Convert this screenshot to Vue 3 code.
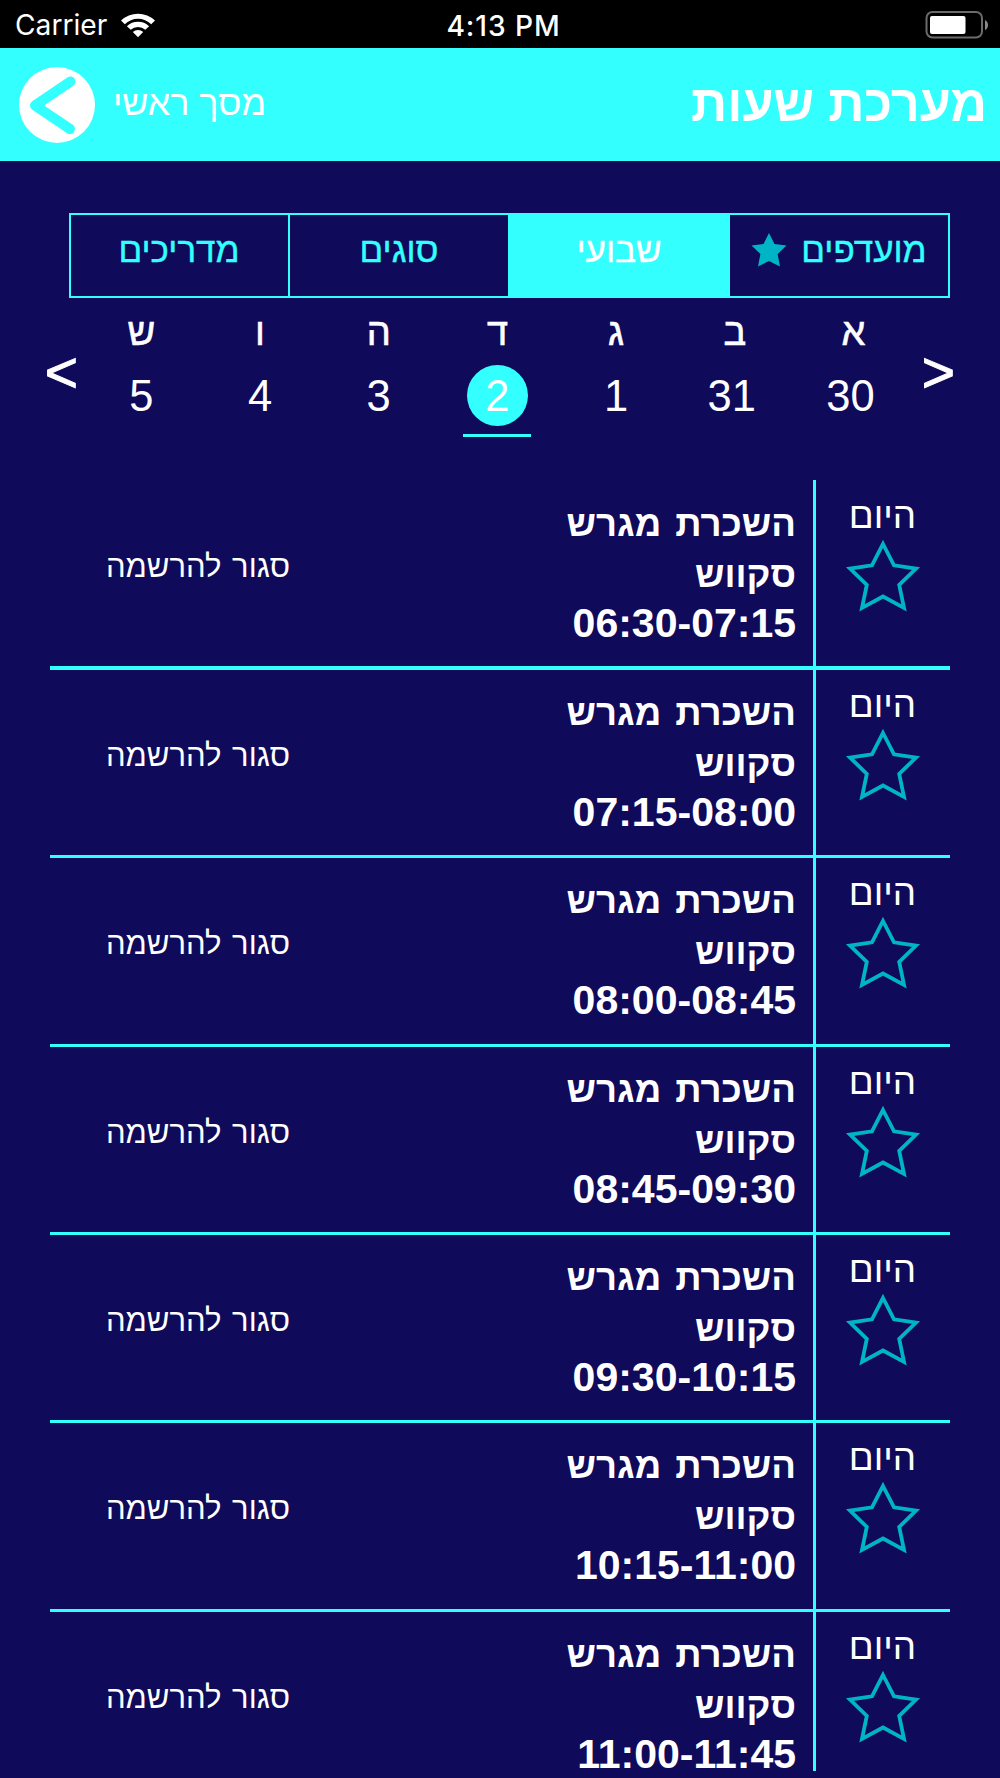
<script setup>
import { ref } from 'vue';

const tabs = ref([
    { id: 1, label: 'מדריכים' },
    { id: 2, label: 'סוגים' },
    { id: 3, label: 'שבועי', active: true },
    { id: 4, label: 'מועדפים', star: true },
]);

const days = ref([
    { letter: 'ש', date: 5 },
    { letter: 'ו', date: 4 },
    { letter: 'ה', date: 3 },
    { letter: 'ד', date: 2, active: true },
    { letter: 'ג', date: 1 },
    { letter: 'ב', date: 31 },
    { letter: 'א', date: 30 },
]);

const hours = ref([
    '06:30-07:15',
    '07:15-08:00',
    '08:00-08:45',
    '08:45-09:30',
    '09:30-10:15',
    '10:15-11:00',
    '11:00-11:45',
]);
</script>

<template>
    <div class="screen">
        <div class="status-bar">
            <div class="carrier">
                <span>Carrier</span>
                <svg class="wifi" viewBox="0 0 34 25" width="34" height="25">
                    <path d="M0 7.5 A24.5 24.5 0 0 1 34 7.5 L30.2 11.2 A19 19 0 0 0 3.8 11.2 Z" />
                    <path d="M5.9 13.2 A16 16 0 0 1 28.1 13.2 L24.3 16.8 A10.6 10.6 0 0 0 9.7 16.8 Z" />
                    <path d="M11.8 19 A7.6 7.6 0 0 1 22.2 19 L17 24.3 Z" />
                </svg>
            </div>
            <div class="clock">4:13 PM</div>
            <svg class="battery" viewBox="0 0 64 28" width="64" height="28">
                <rect x="1.5" y="1" width="55.5" height="25.5" rx="6" fill="none" stroke="#6b6b6b" stroke-width="2" />
                <rect x="5" y="5" width="35.5" height="18" rx="2" fill="#fff" />
                <path d="M60 9 Q63 10.5 63 14 Q63 17.5 60 19 Z" fill="#8a8a8a" />
            </svg>
        </div>

        <header class="header">
            <svg class="back" viewBox="0 0 76 76" width="76" height="76">
                <circle cx="38" cy="38" r="38" fill="#fff" />
                <path d="M51.5 14.5 L16 38.5 L51 62" fill="none" stroke="#33ffff" stroke-width="10" stroke-linecap="round" stroke-linejoin="round" />
            </svg>
            <span class="back-label">מסך ראשי</span>
            <h1 class="title">מערכת שעות</h1>
        </header>

        <nav class="tabs">
            <div v-for="tab in tabs" :key="tab.id" class="tab" :class="{ active: tab.active }">
                <svg v-if="tab.star" class="tab-star" viewBox="0 0 36 34" width="36" height="34">
                    <path d="M18 0 L23.5 11 L35.5 12.6 L26.6 21 L29 33.5 L18 28 L7 33.5 L9.4 21 L0.5 12.6 L12.5 11 Z" />
                </svg>
                <span>{{ tab.label }}</span>
            </div>
        </nav>

        <div class="week">
            <div class="arrow prev">&lt;</div>
            <div v-for="day in days" :key="day.date" class="day" :class="{ active: day.active, wide: day.date > 9 }">
                <div class="letter">{{ day.letter }}</div>
                <div class="date">{{ day.date }}</div>
            </div>
            <div class="arrow next">&gt;</div>
        </div>

        <div class="lessons">
            <div v-for="hour in hours" :key="hour" class="lesson">
                <div class="state">סגור להרשמה</div>
                <div class="details">
                    <p>השכרת מגרש</p>
                    <p>סקווש</p>
                    <p class="hour">{{ hour }}</p>
                </div>
                <div class="favorite">
                    <span>היום</span>
                    <svg viewBox="0 0 76 74" width="76" height="74">
                        <path d="M38 5 L49 26.3 L71 29.5 L54.2 46 L59 68.8 L38 57.5 L17 68.8 L21.8 46 L5 29.5 L27 26.3 Z" />
                    </svg>
                </div>
            </div>
        </div>
    </div>
</template>

<style>
body {
    margin: 0;
    background: #100a5a;
}
</style>

<style scoped>
.screen {
    width: 1000px;
    height: 1778px;
    overflow: hidden;
    background: #100a5a;
    color: #ffffff;
    font-family: "Liberation Sans", Arial, sans-serif;
}

.status-bar {
    display: grid;
    grid-template-columns: 1fr auto 1fr;
    align-items: center;
    box-sizing: border-box;
    height: 48px;
    padding: 2px 11px 0 15px;
    background: #000000;
    font-family: Inter, sans-serif;
    font-size: 28.2px;
}

.carrier {
    display: flex;
    align-items: center;
    gap: 14px;
}

.wifi {
    fill: #ffffff;
}

.clock {
    padding: 1px 0 0 3px;
    font-weight: 500;
    letter-spacing: 0.9px;
}

.battery {
    justify-self: end;
    margin-top: -1px;
}

.header {
    display: flex;
    align-items: center;
    height: 113px;
    padding: 0 13px 0 19px;
    background: #33ffff;
}

.back-label {
    margin: -3px 0 0 18px;
    font-size: 35.8px;
}

.title {
    margin: -3px 0 0 auto;
    font-size: 50.4px;
    font-weight: bold;
}

.tabs {
    display: flex;
    box-sizing: border-box;
    width: 881px;
    height: 85px;
    margin: 52px 0 0 69px;
    border: 2px solid #33ffff;
}

.tab {
    display: flex;
    flex: 1;
    justify-content: center;
    gap: 14px;
    border-right: 2px solid #33ffff;
    color: #33ffff;
    font-size: 35px;
    line-height: 70px;
    -webkit-text-stroke: 0.4px currentColor;
}

.tab:first-child {
    margin-left: -1px;
}

.tab:last-child {
    border-right: 0;
}

.tab.active {
    background: #33ffff;
    color: #ffffff;
}

.tab-star {
    margin-top: 18px;
    fill: #00b4c8;
}

.week {
    display: grid;
    grid-template-columns: 82px repeat(7, 118.7px) 87px;
    height: 182px;
}

.arrow {
    font-size: 57px;
    line-height: 148px;
    text-align: center;
    -webkit-text-stroke: 1px #ffffff;
}

.arrow.prev {
    padding-left: 41px;
}

.arrow.next {
    padding-right: 36px;
}

.day {
    display: flex;
    flex-direction: column;
    align-items: center;
}

.letter {
    height: 67px;
    font-size: 38px;
    line-height: 69px;
    -webkit-text-stroke: 0.6px #ffffff;
}

.date {
    width: 61px;
    height: 61px;
    border-radius: 50%;
    font-size: 43.5px;
    line-height: 62px;
    text-align: center;
}

.day.wide .date {
    text-indent: -6px;
}

.day.active .date {
    background: #33ffff;
}

.day.active::after {
    content: "";
    width: 68px;
    height: 2.5px;
    margin-top: 8px;
    background: #33ffff;
}

.lessons {
    box-sizing: border-box;
    width: 900px;
    height: 1298px;
    margin-left: 50px;
    padding-top: 1.3px;
    overflow: hidden;
}

.lesson {
    display: grid;
    grid-template-columns: 296px 1fr 137px;
    box-sizing: border-box;
    height: 188.45px;
    border-bottom: 3px solid #33ffff;
}

.lesson:first-child {
    border-bottom-width: 4px;
}

.lesson:last-child {
    border-bottom: 0;
}

.state {
    padding-top: 61px;
    font-size: 31px;
    line-height: 50px;
    text-align: center;
    word-spacing: 2px;
}

.details {
    padding: 17px 17px 0 0;
    font-size: 36.6px;
    font-weight: bold;
    line-height: 51px;
    text-align: right;
    word-spacing: 4px;
}

.details p {
    margin: 0;
}

.details .hour {
    font-size: 41px;
    line-height: 47px;
}

.favorite {
    display: flex;
    flex-direction: column;
    align-items: center;
    box-sizing: border-box;
    margin-top: -2px;
    padding: 5px 1px 0 0;
    border-left: 3px solid #33ffff;
    font-size: 36.8px;
    line-height: 64px;
}

/* the divider stops a little above the bottom of the screen */
.lesson:last-child .favorite {
    height: 161px;
}

.favorite svg {
    margin-top: -9px;
}

.favorite path {
    fill: none;
    stroke: #00b4c8;
    stroke-width: 3.8;
}
</style>
